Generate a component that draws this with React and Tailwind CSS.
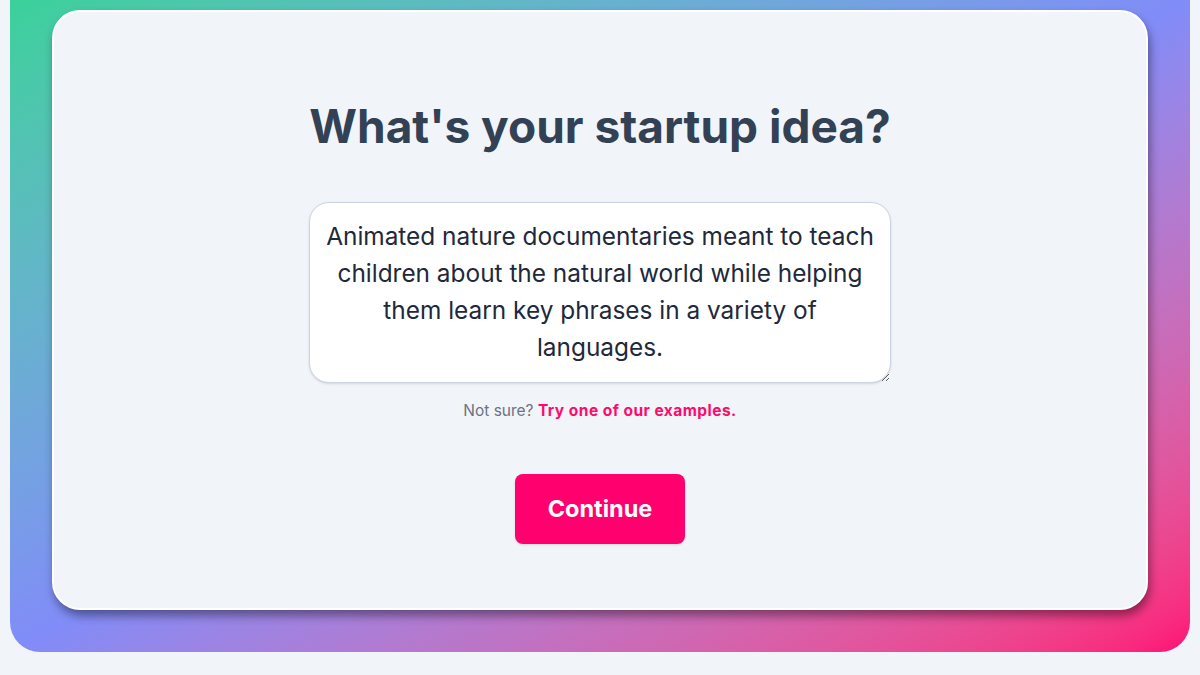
export default function App() {
  return (
    <div className="min-h-screen bg-[#f1f4f9] font-['Inter',sans-serif]">
      <div className="mx-[10px] h-[652px] rounded-b-[30px] bg-gradient-to-br from-[#3ad19a] via-[#818cf8] to-[#ff0a76] px-[42px] pt-[10px]">
        <div className="flex h-[600px] flex-col items-center rounded-[28px] border-2 border-white bg-[#f1f4f9] shadow-[2px_6px_10px_rgba(0,0,0,0.4)]">
          <h1 className="mt-[90px] text-[46px] font-bold leading-[48px] text-[#334155]">
            What's your startup idea?
          </h1>
          <textarea
            className="mt-[52px] h-[181px] w-[582px] rounded-[20px] border border-[#cbd5e1] bg-white px-[10px] py-[15px] text-center text-[24.4px] leading-[37px] text-[#1e293b] shadow-sm outline-none"
            defaultValue="Animated nature documentaries meant to teach children about the natural world while helping them learn key phrases in a variety of languages."
          />
          <p className="mt-[18px] text-[15.5px] leading-[20px] text-[#6b7280]">
            Not sure?{" "}
            <a href="#" className="font-bold tracking-[0.03em] text-[#ff0a6c]">
              Try one of our examples.
            </a>
          </p>
          <button className="mt-[53px] h-[70px] w-[170px] rounded-lg bg-[#ff006e] text-[23.5px] font-bold text-white shadow-sm">
            Continue
          </button>
        </div>
      </div>
    </div>
  );
}
